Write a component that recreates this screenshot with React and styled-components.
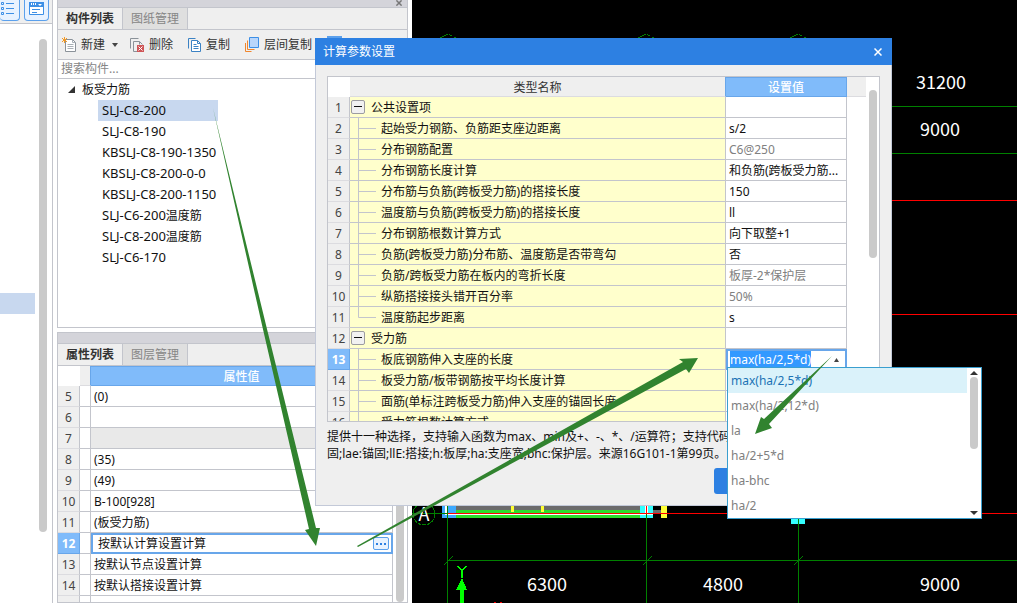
import React, { useEffect, useRef } from 'react';
import styled, { createGlobalStyle, css } from 'styled-components';

const LINE = '#c3c5cc';
const BLUE = '#2d80e2';
const GREEN = '#31832f';

const GlobalStyle = createGlobalStyle`
  * {
    box-sizing: border-box;
  }
  body {
    margin: 0;
    overflow: hidden;
    font-family: 'Noto Sans', 'Noto Sans CJK SC', sans-serif;
    font-size: 12px;
    line-height: 20px;
    color: #111;
  }
  button, input {
    font: inherit;
    color: inherit;
    margin: 0;
    padding: 0;
    border: 0;
    background: none;
  }
  table {
    border-collapse: separate;
    border-spacing: 0;
    table-layout: fixed;
    width: 100%;
  }
  td, th {
    padding: 0;
    font-weight: normal;
  }
`;

const Workspace = styled.div`
  position: relative;
  display: flex;
  height: 100vh;
  overflow: hidden;
  background: #fff;
`;

/* ---------- left strip ---------- */

const Strip = styled.aside`
  flex: 0 0 53px;
  display: flex;
  flex-direction: column;
  border-right: 1px solid ${LINE};
`;
const ViewButtons = styled.div`
  display: flex;
  gap: 4px;
  height: 24px;
  background: #efefef;
  border-bottom: 1px solid ${LINE};
`;
const ViewButton = styled.button`
  display: flex;
  justify-content: ${({ $cut }) => ($cut ? 'flex-start' : 'center')};
  width: ${({ $cut }) => ($cut ? '20px' : '25px')};
  height: 21px;
  background: #e8f2ff;
  border: 1px solid #5ba0ec;
  border-width: ${({ $cut }) => ($cut ? '0 1px 1px 0' : '0 1px 1px')};
  border-radius: 0 0 4px 4px;
`;
const StripBody = styled.div`
  flex: 1;
  display: flex;
  justify-content: space-between;
  padding: 15px 5px 0 0;
`;
const StripSelection = styled.div`
  width: 35px;
  height: 21px;
  margin-top: 254px;
  background: #c8d8ef;
`;
const Thumb = styled.div`
  width: 8px;
  height: ${({ $height }) => $height};
  border-radius: 4px;
  background: #cacaca;
`;

/* ---------- docked panels ---------- */

const Docks = styled.div`
  flex: 0 0 359px;
  display: flex;
  flex-direction: column;
  gap: 4px;
  padding: 0 4px;
`;
const Panel = styled.section`
  display: flex;
  flex-direction: column;
  flex: ${({ $basis }) => ($basis ? `0 0 ${$basis}` : '1')};
  min-height: 0;
  border: 1px solid ${LINE};
  border-top-width: ${({ $basis }) => ($basis ? '0' : '1px')};
  overflow: hidden;
`;
const Grip = styled.div`
  flex: none;
  display: flex;
  justify-content: flex-end;
  height: ${({ $height }) => $height};
  padding-right: 5px;
  background: #d4d4da;
  border-bottom: 1px solid ${LINE};
`;
const GripClose = styled.button`
  display: flex;
`;
const Tabs = styled.div`
  flex: none;
  display: flex;
  height: 22px;
  background: #efefef;
  border-bottom: 1px solid ${LINE};
`;
const Tab = styled.button`
  width: 65px;
  border-right: 1px solid ${LINE};
  color: ${({ $active }) => ($active ? '#333' : '#868686')};
  background: ${({ $active }) => ($active ? '#efefef' : '#dfdfdf')};
  font-weight: ${({ $active }) => ($active ? 'bold' : 'normal')};
`;
const Toolbar = styled.div`
  flex: none;
  display: flex;
  align-items: center;
  gap: 12px;
  height: 30px;
  padding-left: 4px;
  background: #efefef;
  border-bottom: 1px solid ${LINE};
  overflow: hidden;
`;
const ToolButton = styled.button`
  flex: none;
  display: flex;
  align-items: center;
  gap: 4px;
  padding-right: ${({ $split }) => ($split ? '0' : '3px')};
  color: #333;
`;
const ToolLabel = styled.span`
  padding-right: 3px;
`;
const Search = styled.input`
  flex: none;
  height: 19px;
  padding: 0 3px;
  border-bottom: 1px solid ${LINE};
  outline: none;
  &::placeholder {
    color: #868686;
    opacity: 1;
  }
`;
const Tree = styled.ul`
  margin: 0;
  padding: 0;
  list-style: none;
`;
const TreeRoot = styled.div`
  display: flex;
  align-items: center;
  gap: 7px;
  height: 21px;
  padding-left: 10px;
`;
const TreeItem = styled.li`
  width: 120px;
  height: 21px;
  margin-left: 40px;
  padding-left: 4px;
  white-space: nowrap;
  background: ${({ $active }) => ($active ? '#c8d8ef' : 'none')};
`;
const Code = styled.span`
  font-size: 13px;
`;

/* ---------- grids ---------- */

const RowHead = styled.th`
  height: 21px;
  padding-top: 2px;
  line-height: 18px;
  border-right: 1px solid ${LINE};
  border-bottom: 1px solid #dcdce0;
  background: #efefef;
  color: #444;
  ${({ $active }) =>
    $active &&
    css`
      background: #80bbfa;
      border-color: #68a6ea;
      color: #fff;
      font-weight: bold;
    `}
`;
const Cell = styled.td`
  height: 21px;
  padding: 2px 3px 0;
  line-height: 18px;
  border-right: 1px solid ${LINE};
  border-bottom: 1px solid ${LINE};
  background: ${({ $off }) => ($off ? '#e9e9e9' : '#fff')};
  color: ${({ $muted }) => ($muted ? '#808080' : '#111')};
  white-space: nowrap;
  overflow: hidden;
  text-overflow: ellipsis;
`;
const ValueHead = styled.th`
  height: 20px;
  padding-top: 2px;
  line-height: 16px;
  background: #80bbfa;
  border: 1px solid #68a6ea;
  border-left: 0;
  color: #fff;
  font-weight: 500;
`;
const PlainHead = styled.th`
  height: 20px;
  padding-top: 2px;
  line-height: 17px;
  background: ${({ $blank }) => ($blank ? '#fff' : '#efefef')};
  border-bottom: ${({ $blank }) => ($blank ? '0' : '1px solid #dcdce0')};
  border-right: ${({ $edge }) => ($edge ? '1px solid #68a6ea' : '0')};
  color: #333;
`;
const GridArea = styled.div`
  flex: 1;
  display: flex;
  justify-content: space-between;
  min-height: 0;
`;
const PropTable = styled.div`
  flex: 1;
`;
const PropScroll = styled.div`
  flex: 0 0 14px;
  display: flex;
  justify-content: center;
`;
const EditCell = styled.td`
  height: 21px;
  background: #fff;
  border: 2px solid #68a6ea;
`;
const EditLine = styled.div`
  display: flex;
  align-items: center;
  justify-content: space-between;
  height: 17px;
  padding: 0 2px 0 5px;
`;
const MoreButton = styled.button`
  display: flex;
  align-items: center;
  justify-content: center;
  width: 16px;
  height: 13px;
  border: 1px solid #5ba0ec;
  border-radius: 2px;
  background: #e8f2ff;
`;

/* ---------- drawing ---------- */

const Drawing = styled.svg`
  flex: 1;
  height: 100%;
  background: #000;
  text {
    font-family: 'Noto Sans CJK SC', sans-serif;
    font-size: 18px;
    fill: #fff;
    text-anchor: middle;
  }
`;

/* ---------- dialog ---------- */

const Dialog = styled.div`
  position: absolute;
  left: 315px;
  top: 38px;
  width: 577px;
  height: 468px;
  display: flex;
  flex-direction: column;
  background: #efefef;
`;
const TitleBar = styled.header`
  flex: none;
  display: flex;
  align-items: center;
  justify-content: space-between;
  height: 27px;
  padding: 0 10px 0 8px;
  background: ${BLUE};
  color: #fff;
`;
const CloseButton = styled.button`
  display: flex;
`;
const DialogBody = styled.div`
  flex: 1;
  display: flex;
  flex-direction: column;
  padding: 11px 11px;
  border: 1px solid #c3c9d8;
  border-top: 0;
`;
const SettingBox = styled.div`
  display: flex;
  height: 346px;
  border: 1px solid ${LINE};
  background: #fff;
  overflow: hidden;
`;
const SettingTable = styled.div`
  flex: 1;
`;
const SettingScroll = styled.div`
  flex: 0 0 13px;
  display: flex;
  justify-content: center;
  padding-top: 13px;
`;
const NameCell = styled.td`
  height: 21px;
  background: #ffffcc;
  border-right: 1px solid ${LINE};
  border-bottom: 1px solid ${LINE};
`;
const NameLine = styled.div`
  display: flex;
  align-items: center;
  gap: ${({ $group }) => ($group ? '6px' : '5px')};
  height: 20px;
  padding-left: ${({ $group }) => ($group ? '1px' : '8px')};
  white-space: nowrap;
`;
const NameText = styled.span`
  padding-top: 2px;
  line-height: 18px;
`;
const Fold = styled.button`
  display: flex;
  align-items: center;
  justify-content: center;
  width: 14px;
  height: 14px;
  border: 1px solid #9c9ca0;
  border-radius: 2px;
  background: #f1f1f1;
`;
const ComboCell = styled.td`
  height: 21px;
  background: #fff;
  border: 2px solid #68a6ea;
`;
const Combo = styled.div`
  display: flex;
  align-items: center;
  height: 17px;
  padding-right: 6px;
`;
const ComboInput = styled.input`
  flex: 1;
  min-width: 0;
  height: 17px;
  padding-left: 2px;
  outline: none;
  caret-color: transparent;
  &::selection {
    background: #3399ff;
    color: #fff;
  }
`;
const ComboArrow = styled.button`
  display: flex;
`;
const Hint = styled.p`
  margin: 6px 0 0;
  line-height: 17px;
  white-space: nowrap;
`;
const Actions = styled.div`
  display: flex;
  justify-content: flex-end;
  margin-top: 6px;
  padding-right: 90px;
`;
const OkButton = styled.button`
  width: 76px;
  height: 26px;
  border-radius: 3px;
  background: ${BLUE};
`;

const Popup = styled.div`
  position: absolute;
  left: 727px;
  top: 367px;
  width: 255px;
  height: 152px;
  display: flex;
  border: 1px solid #3a9fcf;
  background: #fff;
`;
const Options = styled.ul`
  flex: 1;
  margin: 0;
  padding: 0;
  list-style: none;
`;
const Option = styled.li`
  height: 25px;
  padding-left: 3px;
  line-height: 25px;
  color: ${({ $active }) => ($active ? '#1a73b5' : '#808080')};
  background: ${({ $active }) => ($active ? '#daf2fa' : '#fff')};
`;
const PopupScroll = styled.div`
  flex: 0 0 14px;
  display: flex;
  flex-direction: column;
  align-items: center;
  gap: 2px;
  padding: 3px 0;
`;
const Spacer = styled.div`
  flex: 1;
`;

const Arrows = styled.svg`
  position: absolute;
  inset: 0;
  width: 100%;
  height: 100%;
  pointer-events: none;
`;

const components = [
  { code: 'SLJ-C8-200', active: true },
  { code: 'SLJ-C8-190' },
  { code: 'KBSLJ-C8-190-1350' },
  { code: 'KBSLJ-C8-200-0-0' },
  { code: 'KBSLJ-C8-200-1150' },
  { code: 'SLJ-C6-200', suffix: '温度筋' },
  { code: 'SLJ-C8-200', suffix: '温度筋' },
  { code: 'SLJ-C6-170' },
];

const properties = [
  { no: 5, value: '(0)' },
  { no: 6, value: '' },
  { no: 7, value: '', off: true },
  { no: 8, value: '(35)' },
  { no: 9, value: '(49)' },
  { no: 10, value: 'B-100[928]' },
  { no: 11, value: '(板受力筋)' },
  { no: 12, value: '按默认计算设置计算', editing: true },
  { no: 13, value: '按默认节点设置计算' },
  { no: 14, value: '按默认搭接设置计算' },
  { no: 15, value: '' },
];

const settings = [
  { name: '公共设置项', value: '', group: true },
  { name: '起始受力钢筋、负筋距支座边距离', value: 's/2' },
  { name: '分布钢筋配置', value: 'C6@250', muted: true },
  { name: '分布钢筋长度计算', value: '和负筋(跨板受力筋...' },
  { name: '分布筋与负筋(跨板受力筋)的搭接长度', value: '150' },
  { name: '温度筋与负筋(跨板受力筋)的搭接长度', value: 'll' },
  { name: '分布钢筋根数计算方式', value: '向下取整+1' },
  { name: '负筋(跨板受力筋)分布筋、温度筋是否带弯勾', value: '否' },
  { name: '负筋/跨板受力筋在板内的弯折长度', value: '板厚-2*保护层', muted: true },
  { name: '纵筋搭接接头错开百分率', value: '50%', muted: true },
  { name: '温度筋起步距离', value: 's', last: true },
  { name: '受力筋', value: '', group: true },
  { name: '板底钢筋伸入支座的长度', value: 'max(ha/2,5*d)', editing: true },
  { name: '板受力筋/板带钢筋按平均长度计算', value: '' },
  { name: '面筋(单标注跨板受力筋)伸入支座的锚固长度', value: '' },
  { name: '受力筋根数计算方式', value: '' },
];

const options = [
  'max(ha/2,5*d)',
  'max(ha/2,12*d)',
  'la',
  'ha/2+5*d',
  'ha-bhc',
  'ha/2',
];

const ListIcon = () => (
  <svg width="14" height="16" fill="none" stroke="#3d8fe6">
    <path d="M1.5 2.5h2v2h-2zM1.5 7.5h2v2h-2zM1.5 12.5h2v2h-2z" />
    <path d="M6 3.5h8M6 8.5h8M6 13.5h8" />
  </svg>
);

const WindowIcon = () => (
  <svg width="15" height="16">
    <path d="M.5 2.5h14v12H.5z" fill="#fff" stroke="#3d8fe6" />
    <path d="M0 2h15v5H0z" fill="#3d8fe6" />
    <path d="M2 3h1v2H2zM4 3h1v2H4zM6 3h1v2H6zM9 4h4l-2 2z" fill="#fff" />
    <path d="M3 9.5h8M3 12.5h5" stroke="#3d8fe6" />
  </svg>
);

const NewIcon = () => (
  <svg width="15" height="16" fill="none">
    <path d="M3.5 2.5h7l3 3v9h-10z" fill="#fff" stroke="#8b9299" />
    <path d="M10.5 2.5v3h3M5.5 7.5h6M5.5 9.5h6M5.5 11.5h6" stroke="#a9b0b6" />
    <path d="M0 1h1v1H0zM2 0h1v2H2zM4 1h1v1H4zM1 2h3v2H1zM0 4h1v1H0zM2 4h1v2H2zM4 4h1v1H4z" fill="#f59a23" />
  </svg>
);

const DeleteIcon = () => (
  <svg width="15" height="16" fill="none">
    <path d="M.5 11.5V1.5h8M3.5 14.5v-10h6l3 3" stroke="#8b9299" />
    <path d="M3.5 14.5h4M9.5 4.5v3" stroke="#8b9299" />
    <path d="M7 8h7v7H7z" fill="#cf5557" />
    <path d="M8.5 9.5l4 4M12.5 9.5l-4 4" stroke="#fff" />
  </svg>
);

const CopyIcon = () => (
  <svg width="14" height="16" fill="none" stroke="#3b82c4">
    <path d="M.5 11.5V1.5h7" />
    <path d="M3.5 3.5h6l3 3v8h-9z" fill="#fff" />
    <path d="M9.5 3.5v3h3M5.5 7.5h3M5.5 9.5h5M5.5 11.5h5" />
  </svg>
);

const LayerCopyIcon = () => (
  <svg width="15" height="16" fill="none">
    <path d="M4.5.5h9v10h-9z" fill="#b9d6fb" stroke="#3d8fe6" />
    <path d="M2.500 3.500v9h7M.5 6v8.500h6" stroke="#f0862d" />
  </svg>
);

const Cross = ({ color, size = 8, weight = 2 }) => (
  <svg width={size} height={size} viewBox="0 0 8 8" stroke={color} strokeWidth={weight}>
    <path d="M0.5 0.5l7 7M7.5 0.5l-7 7" />
  </svg>
);

const Caret = ({ up, width = 7, color = '#333' }) => (
  <svg width={width} height="4" viewBox="0 0 8 4" preserveAspectRatio="none" fill={color}>
    <path d={up ? 'M0 4L4 0l4 4z' : 'M0 0l4 4 4-4z'} />
  </svg>
);

const Branch = ({ last }) => (
  <svg width="18" height="20" stroke={LINE} fill="none">
    <path d={last ? 'M.5 0v10.5H18' : 'M.5 0v20M.5 10.5H18'} />
  </svg>
);

const ComponentPanel = () => (
  <Panel $basis="328px">
    <Grip $height="8px">
      <GripClose aria-label="关闭">
        <Cross color="#777" size={6} />
      </GripClose>
    </Grip>
    <Tabs>
      <Tab $active>构件列表</Tab>
      <Tab>图纸管理</Tab>
    </Tabs>
    <Toolbar>
      <ToolButton $split>
        <NewIcon />
        <ToolLabel>新建</ToolLabel>
        <Caret width={6} color="#444" />
      </ToolButton>
      <ToolButton>
        <DeleteIcon />
        删除
      </ToolButton>
      <ToolButton>
        <CopyIcon />
        复制
      </ToolButton>
      <ToolButton>
        <LayerCopyIcon />
        层间复制
      </ToolButton>
      <ToolButton aria-label="存档">
        <svg width="15" height="18">
          <path d="M0 0h15v18H0z" fill="#5ba0ec" />
        </svg>
      </ToolButton>
    </Toolbar>
    <Search placeholder="搜索构件..." aria-label="搜索构件" />
    <TreeRoot>
      <svg width="7" height="7">
        <path d="M7 0v7H0z" fill="#333" />
      </svg>
      板受力筋
    </TreeRoot>
    <Tree>
      {components.map((item, index) => (
        <TreeItem key={index} $active={item.active}>
          <Code>{item.code}</Code>
          {item.suffix}
        </TreeItem>
      ))}
    </Tree>
  </Panel>
);

const PropertyPanel = () => (
  <Panel>
    <Grip $height="11px" />
    <Tabs>
      <Tab $active>属性列表</Tab>
      <Tab>图层管理</Tab>
    </Tabs>
    <GridArea>
      <PropTable>
        <table>
          <colgroup>
            <col width="22" />
            <col width="11" />
            <col />
          </colgroup>
          <thead>
            <tr>
              <PlainHead $blank />
              <PlainHead $edge />
              <ValueHead>属性值</ValueHead>
            </tr>
          </thead>
          <tbody>
            {properties.map((row) => (
              <tr key={row.no}>
                <RowHead $active={row.editing}>{row.no}</RowHead>
                <Cell />
                {row.editing ? (
                  <EditCell>
                    <EditLine>
                      {row.value}
                      <MoreButton aria-label="更多">
                        <svg width="10" height="2" fill="#2d80e2">
                          <path d="M0 0h2v2H0zM4 0h2v2H4zM8 0h2v2H8z" />
                        </svg>
                      </MoreButton>
                    </EditLine>
                  </EditCell>
                ) : (
                  <Cell $off={row.off}>{row.value}</Cell>
                )}
              </tr>
            ))}
          </tbody>
        </table>
      </PropTable>
      <PropScroll>
        <Thumb $height="100%" />
      </PropScroll>
    </GridArea>
  </Panel>
);

const FloorPlan = () => (
  <Drawing>
    <g transform="translate(-412 0)" fill="none" shapeRendering="crispEdges">
      <g stroke="#008000" strokeDasharray="4 1">
        <path d="M440 38l8-4 8 4M638 38l8-4 8 4M790 38l8-4 8 4" />
        <circle cx="424" cy="514" r="11" />
      </g>
      <path d="M456 505h184v5H456zM653 510h8v3h-8z" fill="#6b6b6b" />
      <path d="M456 510h184v8H456z" fill="#2bdc2b" />
      <path d="M442 505h14v13h-14z" fill="#3ba9ff" />
      <path d="M640 505h13v13h-13zM791 519h14v5h-14z" fill="#34ffff" />
      <path d="M511 505h3v7h-3zM541 505h3v7h-3zM661 505h6v13h-6z" fill="#ffff33" />
      <path d="M445 505h3v9h-3zM645 505h3v9h-3zM445 514h208v1H445z" fill="#fff" />
      <path d="M447 513.5h570M646.5 505v8M892 200.5h125M892 314.5h125M494 602.5h2M500 602.5h2" stroke="#f00" />
      <path
        d="M412 513.5h35M447.5 505v98M646.5 514v89M798.5 519v84M447 560.5h570M892 106.5h125M892 153.5h125"
        stroke="#008000"
      />
      <path d="M444 565l9-9M643 565l9-9M794 565l9-9" stroke="#008000" />
      <path d="M458 566l4 5 4-5M462 571v7" stroke="#0f0" strokeWidth="1.5" />
      <path d="M462 578l5 12h-3v13h-4v-13h-4z" fill="#0f0" />
      <text x="424" y="521">A</text>
      <text x="941" y="89">31200</text>
      <text x="940" y="136">9000</text>
      <text x="547" y="591">6300</text>
      <text x="723" y="591">4800</text>
      <text x="940" y="591">9000</text>
    </g>
  </Drawing>
);

const SettingDialog = () => {
  const inputRef = useRef(null);

  useEffect(() => {
    inputRef.current.focus();
    inputRef.current.select();
  }, []);

  return (
    <Dialog role="dialog" aria-label="计算参数设置">
      <TitleBar>
        计算参数设置
        <CloseButton aria-label="关闭">
          <Cross color="#fff" weight={1.5} />
        </CloseButton>
      </TitleBar>
      <DialogBody>
        <SettingBox>
          <SettingTable>
            <table>
              <colgroup>
                <col width="22" />
                <col />
                <col width="121" />
                <col width="19" />
              </colgroup>
              <thead>
                <tr>
                  <PlainHead $blank />
                  <PlainHead $edge>类型名称</PlainHead>
                  <ValueHead>设置值</ValueHead>
                  <PlainHead />
                </tr>
              </thead>
              <tbody>
                {settings.map((row, index) => (
                  <tr key={row.name}>
                    <RowHead $active={row.editing}>{index + 1}</RowHead>
                    <NameCell>
                      <NameLine $group={row.group}>
                        {row.group ? (
                          <Fold aria-label="折叠">
                            <svg width="8" height="2">
                              <path d="M0 0h8v1H0z" fill="#111" />
                            </svg>
                          </Fold>
                        ) : (
                          <Branch last={row.last} />
                        )}
                        <NameText>{row.name}</NameText>
                      </NameLine>
                    </NameCell>
                    {row.editing ? (
                      <ComboCell>
                        <Combo>
                          <ComboInput
                            ref={inputRef}
                            role="combobox"
                            aria-label={row.name}
                            aria-expanded="true"
                            aria-controls="length-options"
                            defaultValue={row.value}
                          />
                          <ComboArrow aria-label="收起">
                            <Caret up width={5} color="#444" />
                          </ComboArrow>
                        </Combo>
                      </ComboCell>
                    ) : (
                      <Cell $muted={row.muted}>{row.value}</Cell>
                    )}
                  </tr>
                ))}
              </tbody>
            </table>
          </SettingTable>
          <SettingScroll>
            <Thumb $height="168px" />
          </SettingScroll>
        </SettingBox>
        <Hint>
          提供十一种选择，支持输入函数为max、min及+、-、*、/运算符；支持代码
          <br />
          固;lae:锚固;llE:搭接;h:板厚;ha:支座宽;bhc:保护层。来源16G101-1第99页。
        </Hint>
        <Actions>
          <OkButton aria-label="确定" />
        </Actions>
      </DialogBody>
    </Dialog>
  );
};

const App = () => (
  <Workspace>
    <GlobalStyle />
    <Strip>
      <ViewButtons>
        <ViewButton $cut aria-label="列表">
          <ListIcon />
        </ViewButton>
        <ViewButton aria-label="窗口">
          <WindowIcon />
        </ViewButton>
      </ViewButtons>
      <StripBody>
        <StripSelection />
        <Thumb $height="493px" />
      </StripBody>
    </Strip>
    <Docks>
      <ComponentPanel />
      <PropertyPanel />
    </Docks>
    <FloorPlan />
    <SettingDialog />
    <Popup>
      <Options id="length-options" role="listbox" aria-label="设置值">
        {options.map((option, index) => (
          <Option
            key={option}
            role="option"
            aria-selected={index === 0}
            $active={index === 0}
          >
            {option}
          </Option>
        ))}
      </Options>
      <PopupScroll>
        <Caret up width={8} />
        <Thumb $height="72px" />
        <Spacer />
        <Caret width={8} />
      </PopupScroll>
    </Popup>
    <Arrows fill={GREEN}>
      <path d="M213 108L266 325l50 203 4 0-4 18-11-16 4-1L262 325z" />
      <path d="M357 546L683 362l-4-3 19-1-9 15-3-4L358 547z" />
      <path d="M832 356L769 424l3 4-17 6 6-17 3 2z" />
    </Arrows>
  </Workspace>
);

export default App;
